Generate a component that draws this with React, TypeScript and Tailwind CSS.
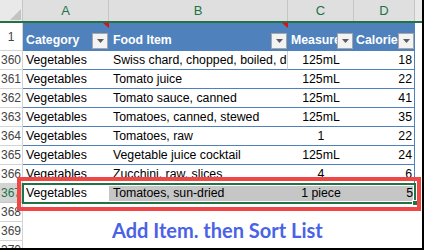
import React from 'react'

type Row = { n: number; a: string; b: string; c: string; d: string }

const rows: Row[] = [
    { n: 360, a: 'Vegetables', b: 'Swiss chard, chopped, boiled, drained', c: '125mL', d: '18' },
    { n: 361, a: 'Vegetables', b: 'Tomato juice', c: '125mL', d: '22' },
    { n: 362, a: 'Vegetables', b: 'Tomato sauce, canned', c: '125mL', d: '41' },
    { n: 363, a: 'Vegetables', b: 'Tomatoes, canned, stewed', c: '125mL', d: '35' },
    { n: 364, a: 'Vegetables', b: 'Tomatoes, raw', c: '1', d: '22' },
    { n: 365, a: 'Vegetables', b: 'Vegetable juice cocktail', c: '125mL', d: '24' },
    { n: 366, a: 'Vegetables', b: 'Zucchini, raw, slices', c: '4', d: '6' },
]

function RowNum({ n, selected }: { n: number; selected?: boolean }) {
    return (
        <div
            className={
                selected
                    ? 'flex w-[23px] shrink-0 items-center justify-center border-r border-b border-[#c6c6c6] bg-[#d4d4d4] text-[12px] text-[#217346]'
                    : 'flex w-[23px] shrink-0 items-center justify-center border-r border-b border-[#d4d4d4] bg-white text-[12px] text-[#444]'
            }
        >
            {n}
        </div>
    )
}

function FilterButton() {
    return (
        <span className="absolute right-[1px] bottom-[2px] flex h-[16px] w-[16px] items-center justify-center border border-[#a6a6a6] bg-[#f3f3f3]">
            <svg width="7" height="4" viewBox="0 0 7 4">
                <path d="M0 0h7L3.5 4z" fill="#5c5c5c" />
            </svg>
        </span>
    )
}

function CommentMark() {
    return (
        <svg className="absolute right-0 top-0" width="6" height="5" viewBox="0 0 6 5">
            <path d="M0 0h6v5z" fill="#e01010" />
        </svg>
    )
}

export default function App() {
    return (
        <div className="relative h-[250px] w-[424px] overflow-hidden border-r-2 border-b-2 border-black bg-white font-['Liberation_Sans',Arial,sans-serif] text-[12.3px] text-black">
            {/* column letters */}
            <div className="flex h-[23px] border-b-2 border-[#217346]">
                <div className="relative w-[23px] shrink-0 border-r border-[#c6c6c6] bg-[#e9e9e9]">
                    <svg className="absolute right-[1px] bottom-[1px]" width="11" height="11" viewBox="0 0 11 11">
                        <path d="M11 0v11H0z" fill="#c3c3c3" />
                    </svg>
                </div>
                <div className="flex w-[86px] shrink-0 items-center justify-center border-r border-[#c6c6c6] bg-[#dfdfdf] text-[13px] text-[#217346]">A</div>
                <div className="flex w-[179px] shrink-0 items-center justify-center border-r border-[#c6c6c6] bg-[#dfdfdf] text-[13px] text-[#217346]">B</div>
                <div className="flex w-[66px] shrink-0 items-center justify-center border-r border-[#c6c6c6] bg-[#dfdfdf] text-[13px] text-[#217346]">C</div>
                <div className="flex w-[61px] shrink-0 items-center justify-center border-r border-[#c6c6c6] bg-[#dfdfdf] text-[13px] text-[#217346]">D</div>
                <div className="flex-1 bg-[#e9e9e9]" />
            </div>

            {/* table header */}
            <div className="flex h-[28px]">
                <RowNum n={1} />
                <div className="relative flex w-[86px] shrink-0 items-end bg-[#4f81bd] pb-[2px] pl-[3px] font-bold text-white">
                    Category
                    <CommentMark />
                    <FilterButton />
                </div>
                <div className="relative flex w-[179px] shrink-0 items-end bg-[#4f81bd] pb-[2px] pl-[4px] font-bold text-white">
                    Food Item
                    <CommentMark />
                    <FilterButton />
                </div>
                <div className="relative flex w-[66px] shrink-0 items-end overflow-hidden whitespace-nowrap bg-[#4f81bd] pb-[2px] pl-[3px] font-bold text-white">
                    Measure
                    <FilterButton />
                </div>
                <div className="relative flex w-[61px] shrink-0 items-end overflow-hidden whitespace-nowrap bg-[#4f81bd] pb-[2px] pl-[2px] font-bold text-white">
                    Calories
                    <FilterButton />
                </div>
                <div className="flex-1" />
            </div>

            {/* data rows */}
            {rows.map((r) => (
                <div key={r.n} className="flex h-[19px]">
                    <RowNum n={r.n} />
                    <div className="flex w-[86px] shrink-0 items-center border-b border-[#4f81bd] pl-[3px]">{r.a}</div>
                    <div
                        className={
                            r.n === 360
                                ? 'flex w-[179px] shrink-0 items-center overflow-hidden whitespace-nowrap border-r border-b border-r-[#d0d0d0] border-b-[#4f81bd] pl-[4px]'
                                : 'flex w-[179px] shrink-0 items-center overflow-hidden whitespace-nowrap border-b border-[#4f81bd] pl-[4px]'
                        }
                    >
                        {r.b}
                    </div>
                    <div className="flex w-[66px] shrink-0 items-center justify-center border-b border-[#4f81bd]">{r.c}</div>
                    <div className="flex w-[61px] shrink-0 items-center justify-end border-r border-b border-[#4f81bd] pr-[2px]">{r.d}</div>
                    <div className="flex-1" />
                </div>
            ))}

            {/* new, selected row */}
            <div className="flex h-[19px]">
                <RowNum n={367} selected />
                <div className="relative flex">
                    <div className="flex w-[86px] shrink-0 items-center bg-white pl-[3px]">Vegetables</div>
                    <div className="flex w-[179px] shrink-0 items-center bg-[#c6c6c6] pl-[4px]">Tomatoes, sun-dried</div>
                    <div className="flex w-[66px] shrink-0 items-center justify-center bg-[#c6c6c6]">1 piece</div>
                    <div className="flex w-[61px] shrink-0 items-center justify-end bg-[#c6c6c6] pr-[2px]">5</div>
                    <div className="pointer-events-none absolute -top-[1px] -right-[1px] -bottom-[1px] -left-[1px] border-2 border-[#217346] shadow-[inset_0_0_0_1px_#fff]" />
                    <div className="absolute -right-[3px] -bottom-[3px] h-[6px] w-[6px] border border-white bg-[#217346]" />
                </div>
                <div className="flex-1" />
            </div>

            {[368, 369, 370].map((n) => (
                <div key={n} className="flex h-[19px]">
                    <RowNum n={n} />
                    <div className="flex-1" />
                </div>
            ))}

            {/* highlight around the added row */}
            <div className="absolute top-[177px] left-[17px] h-[34px] w-[404px] border-4 border-[#f04646]" />

            {/* caption text box */}
            <div className="absolute top-[220px] left-[112px] font-['Lato',sans-serif] text-[20px] leading-none font-bold text-[#4a63e6]">
                Add Item. then Sort List
            </div>
        </div>
    )
}
